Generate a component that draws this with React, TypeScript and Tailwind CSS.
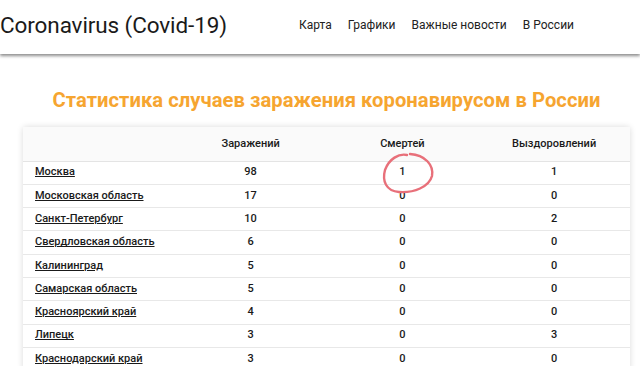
import React from "react";

const rows = [
  { id: 1, name: "Москва", cases: 98, deaths: 1, recovered: 1 },
  { id: 2, name: "Московская область", cases: 17, deaths: 0, recovered: 0 },
  { id: 3, name: "Санкт-Петербург", cases: 10, deaths: 0, recovered: 2 },
  { id: 4, name: "Свердловская область", cases: 6, deaths: 0, recovered: 0 },
  { id: 5, name: "Калининград", cases: 5, deaths: 0, recovered: 0 },
  { id: 6, name: "Самарская область", cases: 5, deaths: 0, recovered: 0 },
  { id: 7, name: "Красноярский край", cases: 4, deaths: 0, recovered: 0 },
  { id: 8, name: "Липецк", cases: 3, deaths: 0, recovered: 3 },
  { id: 9, name: "Краснодарский край", cases: 3, deaths: 0, recovered: 0 },
];

const navLinks = ["Карта", "Графики", "Важные новости", "В России"];

const App = () => {
  return (
    <div className="min-h-[366px] bg-white font-['Roboto',sans-serif] text-[#1a1a1a] overflow-hidden">
      <header className="h-[54px] flex items-center justify-between bg-white shadow-[0_2px_3px_rgba(0,0,0,0.45)] relative z-10">
        <h1 className="text-[22.5px] leading-none tracking-[-0.1px] -mt-[4px]">Coronavirus (Covid-19)</h1>
        <nav className="flex gap-[16px] text-[12px] pr-[66px] -mt-[4px]">
          {navLinks.map((link) => (
            <a key={link} className="text-[#222]">
              {link}
            </a>
          ))}
        </nav>
      </header>

      <div className="ml-[23px] w-[607px]">
        <h2 className="mt-[32px] text-center text-[20.2px] font-bold text-[#f6a530] leading-[28px] tracking-[0.05px]">
          Статистика случаев заражения коронавирусом в России
        </h2>

        <div className="mt-[13px] rounded-[3px] bg-white shadow-[0_0_6px_rgba(0,0,0,0.15)] relative">
          <table className="w-full table-fixed text-[11px]">
            <thead>
              <tr className="h-[34px] bg-[#fafafa] border-b border-[#e4e4e4]">
                <th></th>
                <th className="font-medium">Заражений</th>
                <th className="font-medium">Смертей</th>
                <th className="font-medium">Выздоровлений</th>
              </tr>
            </thead>
            <tbody>
              {rows.map((row) => (
                <tr key={row.id} className="h-[23.3px] border-b border-[#e8e8e8]">
                  <td className="pl-[12px] font-medium">
                    <a className="underline underline-offset-[1px]">{row.name}</a>
                  </td>
                  <td className="text-center font-medium">{row.cases}</td>
                  <td className="text-center font-medium">{row.deaths}</td>
                  <td className="text-center font-medium">{row.recovered}</td>
                </tr>
              ))}
            </tbody>
          </table>

          {/* hand drawn circle */}
          <svg
            className="absolute left-[357px] top-[24px] pointer-events-none"
            width="56"
            height="44"
            viewBox="0 0 56 44"
          >
            <path
              d="M27 4 C19 2 9 8 5 19 C2 30 6 40 19 41 C34 42 49 36 52 25 C54 14 45 4 30 3"
              fill="none"
              stroke="#e8707a"
              strokeWidth="2.4"
              strokeLinecap="round"
            />
          </svg>
        </div>
      </div>
    </div>
  );
};

export default App;
